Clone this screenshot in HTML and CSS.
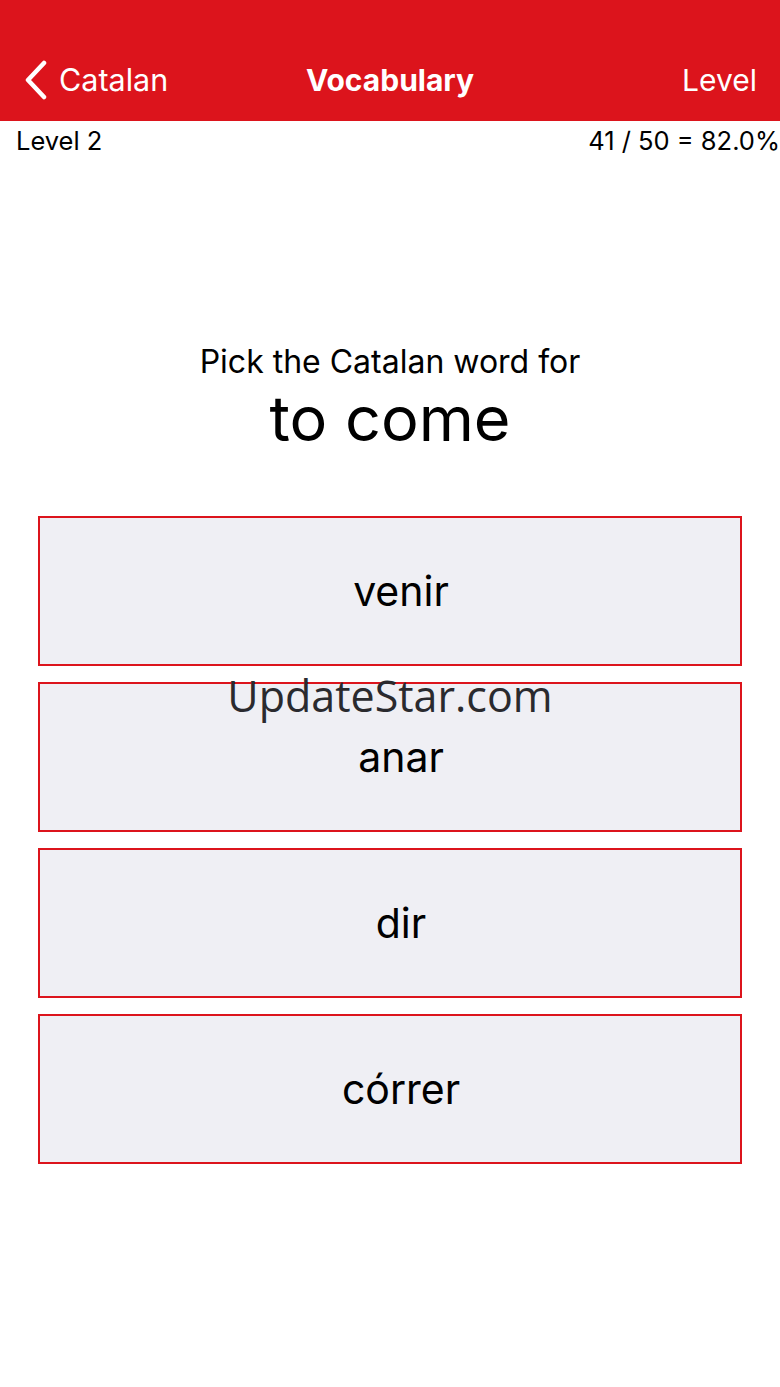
FILE: index.html
```html
<!DOCTYPE html>
<html>
<head>
<meta charset="utf-8">
<link rel="stylesheet" href="styles.css">
</head>
<body>
<div class="screen">
  <header class="navbar">
    <div class="nav-row">
      <div class="back">
        <svg class="chev" width="26" height="40" viewBox="0 0 26 40"><path d="M21 3 L5 20 L21 37" fill="none" stroke="#fff" stroke-width="4.5" stroke-linecap="round" stroke-linejoin="round"/></svg>
        <span>Catalan</span>
      </div>
      <div class="title">Vocabulary</div>
      <div class="right">Level</div>
    </div>
  </header>
  <div class="stats">
    <span>Level 2</span>
    <span>41 / 50 = 82.0%</span>
  </div>
  <div class="question">
    <div class="prompt">Pick the Catalan word for</div>
    <div class="word">to come</div>
  </div>
  <div class="answers">
    <div class="answer">venir</div>
    <div class="answer">anar</div>
    <div class="answer">dir</div>
    <div class="answer">córrer</div>
  </div>
  <div class="watermark">UpdateStar.com</div>
</div>
</body>
</html>
```
FILE: styles.css
```css
* { box-sizing: border-box; }
html, body { margin: 0; padding: 0; background: #fff; }
body { font-family: "Inter", "Liberation Sans", sans-serif; color: #000; }
.screen { position: relative; width: 780px; height: 1387px; overflow: hidden; }
.navbar { background: #dc141c; height: 121px; padding-top: 40px; }
.nav-row { position: relative; height: 81px; display: flex; align-items: center; justify-content: space-between; padding: 0 23px 2px 23px; color: #fff; }
.back { display: flex; align-items: center; gap: 10px; font-size: 30.5px; }
.chev { display: block; }
.title { position: absolute; left: 0; right: 0; text-align: center; font-weight: 700; font-size: 30px; pointer-events: none; }
.right { font-size: 30px; }
.stats { display: flex; justify-content: space-between; padding: 4px 0 0 16px; height: 40px; font-size: 25.5px; line-height: 32px; }
.question { text-align: center; margin-top: 181px; }
.prompt { font-size: 32px; line-height: 40px; }
.word { font-size: 63px; line-height: 72px; }
.answers { display: flex; flex-direction: column; gap: 16px; margin: 62px 38px 0 38px; }
.answer { height: 150px; border: 2px solid #dc141c; background: #efeff4; display: flex; align-items: center; justify-content: center; padding-left: 22px; font-size: 41px; }
.watermark { position: absolute; left: 0; right: 0; top: 666px; text-align: center; font-family: "Open Sans", "DejaVu Sans", sans-serif; font-size: 43px; color: #2a2a2e; }
```
